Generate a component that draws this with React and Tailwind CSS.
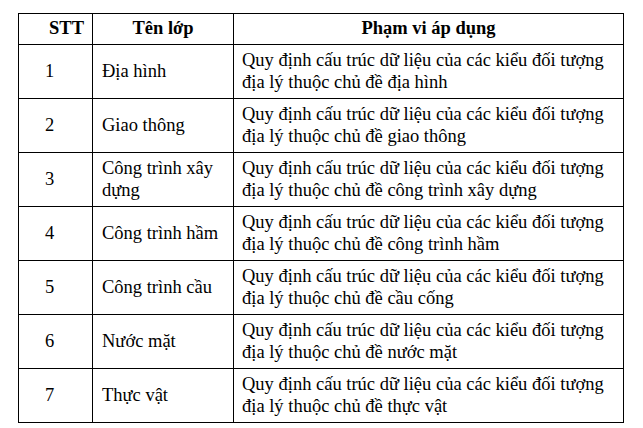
import React from 'react';

const rows = [
  { n: '1', name: 'Địa hình', topic: 'địa hình' },
  { n: '2', name: 'Giao thông', topic: 'giao thông' },
  { n: '3', name: 'Công trình xây dựng', topic: 'công trình xây dựng' },
  { n: '4', name: 'Công trình hầm', topic: 'công trình hầm' },
  { n: '5', name: 'Công trình cầu', topic: 'cầu cống' },
  { n: '6', name: 'Nước mặt', topic: 'nước mặt' },
  { n: '7', name: 'Thực vật', topic: 'thực vật' },
];

export default function App() {
  return (
    <div
      className="w-[643px] h-[428px] bg-white text-black pt-[13px] pl-[18px]"
      style={{ fontFamily: '"Liberation Serif", "Times New Roman", serif' }}
    >
      <table className="table-fixed border-collapse w-[605px] text-[18.5px] leading-[21.5px]">
        <colgroup>
          <col className="w-[74px]" />
          <col className="w-[141px]" />
          <col className="w-[390px]" />
        </colgroup>
        <thead>
          <tr className="h-[31px]">
            <th className="border border-black font-bold text-left pl-[30px] p-0">STT</th>
            <th className="border border-black font-bold text-center p-0">Tên lớp</th>
            <th className="border border-black font-bold text-center p-0">Phạm vi áp dụng</th>
          </tr>
        </thead>
        <tbody>
          {rows.map((r) => (
            <tr key={r.n} className="h-[54px]">
              <td className="border border-black align-middle pl-[26px]">{r.n}</td>
              <td className="border border-black align-middle pl-[9px] pr-[4px]">{r.name}</td>
              <td className="border border-black align-middle pl-[8px] pr-[2px]">
                Quy định cấu trúc dữ liệu của các kiểu đối tượng
                <br />
                địa lý thuộc chủ đề {r.topic}
              </td>
            </tr>
          ))}
        </tbody>
      </table>
    </div>
  );
}
